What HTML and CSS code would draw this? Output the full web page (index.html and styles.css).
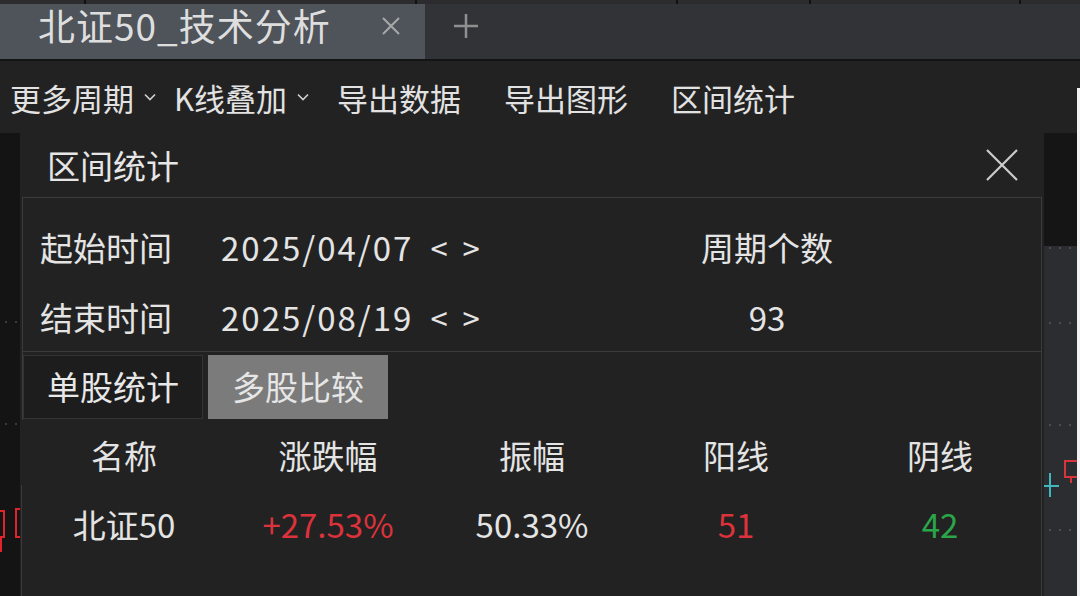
FILE: index.html
```html
<!DOCTYPE html>
<html lang="zh-CN">
<head>
  <meta charset="UTF-8">
  <title>北证50_技术分析</title>
  <link rel="stylesheet" href="styles.css">
</head>
<body>

  <div class="topstrip">
    <span></span><span></span><span></span><span></span><span></span><span></span>
  </div>

  <div class="tabbar">
    <div class="tab-active">
      <span class="tab-title">北证50_技术分析</span>
      <svg class="tab-close" width="20" height="20" viewBox="0 0 20 20"><path d="M2 2L18 18M18 2L2 18" stroke="#a8a8a8" stroke-width="2"/></svg>
    </div>
    <svg class="tab-add" width="26" height="26" viewBox="0 0 26 26"><path d="M13 1V25M1 13H25" stroke="#8f8f8f" stroke-width="2.5"/></svg>
  </div>

  <div class="body-row">
    <div class="main">

      <div class="toolbar">
        <div class="dd">更多周期 <svg width="12" height="8" viewBox="0 0 12 8"><path d="M1 1.5L6 6.5L11 1.5" fill="none" stroke="#cfcfcf" stroke-width="1.6"/></svg></div>
        <div class="dd">K线叠加 <svg width="12" height="8" viewBox="0 0 12 8"><path d="M1 1.5L6 6.5L11 1.5" fill="none" stroke="#cfcfcf" stroke-width="1.6"/></svg></div>
        <div class="tool">导出数据</div>
        <div class="tool">导出图形</div>
        <div class="tool">区间统计</div>
      </div>

      <div class="workspace">
        <div class="chart-left">
          <svg width="20" height="463" viewBox="0 0 20 463">
            <g fill="#4a4a4a">
              <circle cx="6" cy="189" r="1"/><circle cx="16" cy="189" r="1"/>
              <circle cx="6" cy="291" r="1"/><circle cx="16" cy="291" r="1"/>
            </g>
            <g fill="none" stroke="#e0242c" stroke-width="2">
              <path d="M-4 378H4V404H-4M1 404V419"/>
              <path d="M20 376H16V404H20"/>
            </g>
          </svg>
        </div>

        <div class="dialog">
          <div class="dlg-title">
            <span>区间统计</span>
            <svg width="32" height="32" viewBox="0 0 32 32"><path d="M1 1L31 31M31 1L1 31" stroke="#cdcdcd" stroke-width="2.2"/></svg>
          </div>

          <div class="range">
            <div class="lbl">起始时间</div>
            <div class="val">2025/04/07<span class="arrows">&lt; &gt;</span></div>
            <div class="cnt">周期个数</div>
            <div class="lbl">结束时间</div>
            <div class="val">2025/08/19<span class="arrows">&lt; &gt;</span></div>
            <div class="cnt">93</div>
          </div>

          <div class="tabs">
            <div class="tab">单股统计</div>
            <div class="tab on">多股比较</div>
          </div>

          <table class="stats">
            <thead>
              <tr><th>名称</th><th>涨跌幅</th><th>振幅</th><th>阳线</th><th>阴线</th></tr>
            </thead>
            <tbody>
              <tr><td>北证50</td><td class="up">+27.53%</td><td>50.33%</td><td class="up">51</td><td class="down">42</td></tr>
            </tbody>
          </table>
        </div>

        <div class="chart-right">
          <svg width="33" height="463" viewBox="0 0 33 463">
            <rect x="0" y="0" width="33" height="113" fill="#151515"/>
            <g fill="#55575c">
              <circle cx="6" cy="115" r="1"/><circle cx="16" cy="115" r="1"/><circle cx="26" cy="115" r="1"/>
              <circle cx="6" cy="190" r="1"/><circle cx="16" cy="190" r="1"/><circle cx="26" cy="190" r="1"/>
              <circle cx="6" cy="292" r="1"/><circle cx="16" cy="292" r="1"/><circle cx="26" cy="292" r="1"/>
              <circle cx="6" cy="397" r="1"/><circle cx="16" cy="397" r="1"/><circle cx="26" cy="397" r="1"/>
            </g>
            <path d="M6 340V364M-1 353H15" stroke="#3fb7bd" stroke-width="2"/>
            <path d="M21 328H34V344H21ZM27 344V350" fill="none" stroke="#d8343c" stroke-width="2"/>
          </svg>
        </div>
      </div>

    </div>
    <div class="edge"></div>
  </div>

</body>
</html>
```

FILE: styles.css
```css
body {
  margin: 0;
  width: 1080px;
  height: 596px;
  overflow: hidden;
  background: #222222;
  color: #e4e4e4;
  font-family: "Noto Sans CJK SC", "Noto Sans", sans-serif;
}
svg {
  display: block;
}

/* window strip on top */
.topstrip {
  display: flex;
  height: 4px;
  background: #2c2c2f;
}
.topstrip span {
  border-right: 2px solid #111;
}
.topstrip span:nth-child(1) { width: 84px; }
.topstrip span:nth-child(2) { width: 329px; }
.topstrip span:nth-child(3) { width: 259px; }
.topstrip span:nth-child(4) { width: 131px; }
.topstrip span:nth-child(5) { width: 208px; }
.topstrip span:nth-child(6) { flex: 1; border-right: none; }

/* tabs */
.tabbar {
  display: flex;
  align-items: flex-start;
  height: 55px;
  background: #313337;
  border-bottom: 2px solid #141414;
}
.tab-active {
  display: flex;
  align-items: center;
  justify-content: space-between;
  width: 425px;
  height: 55px;
  box-sizing: border-box;
  padding: 0 24px 12px 38px;
  background: #4f545b;
}
.tab-title {
  font-size: 37px;
  line-height: 43px;
  letter-spacing: 1px;
  color: #dedede;
}
.tab-add {
  margin: 9px 0 0 28px;
}

.body-row {
  display: flex;
}
.main {
  width: 1077px;
}
.edge {
  width: 3px;
  background: linear-gradient(#222 27px, #f2f2f2 27px);
}

/* toolbar */
.toolbar {
  display: flex;
  align-items: center;
  gap: 18px;
  height: 72px;
  padding-left: 10px;
  font-size: 31px;
  color: #e2e2e2;
}
.dd {
  display: flex;
  align-items: center;
  gap: 10px;
}
.dd + .tool {
  margin-left: 10px;
}
.tool + .tool {
  margin-left: 25px;
}

/* workspace */
.workspace {
  display: flex;
  height: 463px;
}
.chart-left {
  width: 20px;
  background: #141414;
}
.chart-right {
  width: 33px;
  background: #2c2d31;
}
.dialog {
  width: 1024px;
  padding: 0 2px;
  box-sizing: border-box;
  background:
    linear-gradient(#3a3a3a, #3a3a3a) 1px 352px / 1px 100% no-repeat,
    linear-gradient(#3a3a3a, #3a3a3a) 1021px 64px / 1px 100% no-repeat,
    #222222;
}
.dlg-title {
  display: flex;
  align-items: center;
  justify-content: space-between;
  height: 64px;
  padding: 0 24px 0 25px;
  font-size: 33px;
  color: #e6e6e6;
}

.range {
  display: grid;
  grid-template-columns: 181px 272px 1fr;
  grid-auto-rows: 70px;
  align-items: center;
  height: 155px;
  padding: 14px 0 0 17px;
  box-sizing: border-box;
  border: 1px solid #3b3b3b;
  font-size: 33px;
}
.val {
  display: flex;
  align-items: center;
  letter-spacing: 2px;
}
.arrows {
  margin-left: 17px;
  font-size: 31px;
  letter-spacing: 4px;
}
.cnt {
  text-align: center;
}

.tabs {
  display: flex;
  gap: 5px;
  padding-top: 3px;
  border-left: 1px solid #3b3b3b;
  height: 68px;
  box-sizing: border-box;
}
.tab {
  width: 180px;
  height: 64px;
  box-sizing: border-box;
  border: 1px solid #333;
  background: #1d1d1d;
  font-size: 33px;
  line-height: 60px;
  text-align: center;
  color: #e8e8e8;
}
.tab.on {
  background: #7b7b7b;
  border-color: #7b7b7b;
  color: #e6e6e6;
}

.stats {
  width: 1020px;
  table-layout: fixed;
  border-collapse: collapse;
  font-size: 33px;
}
.stats th, .stats td {
  height: 69px;
  padding: 0;
  text-align: center;
  font-weight: normal;
  color: #e4e4e4;
}
.stats td.up {
  color: #dd323b;
}
.stats td.down {
  color: #2ba54a;
}
```
